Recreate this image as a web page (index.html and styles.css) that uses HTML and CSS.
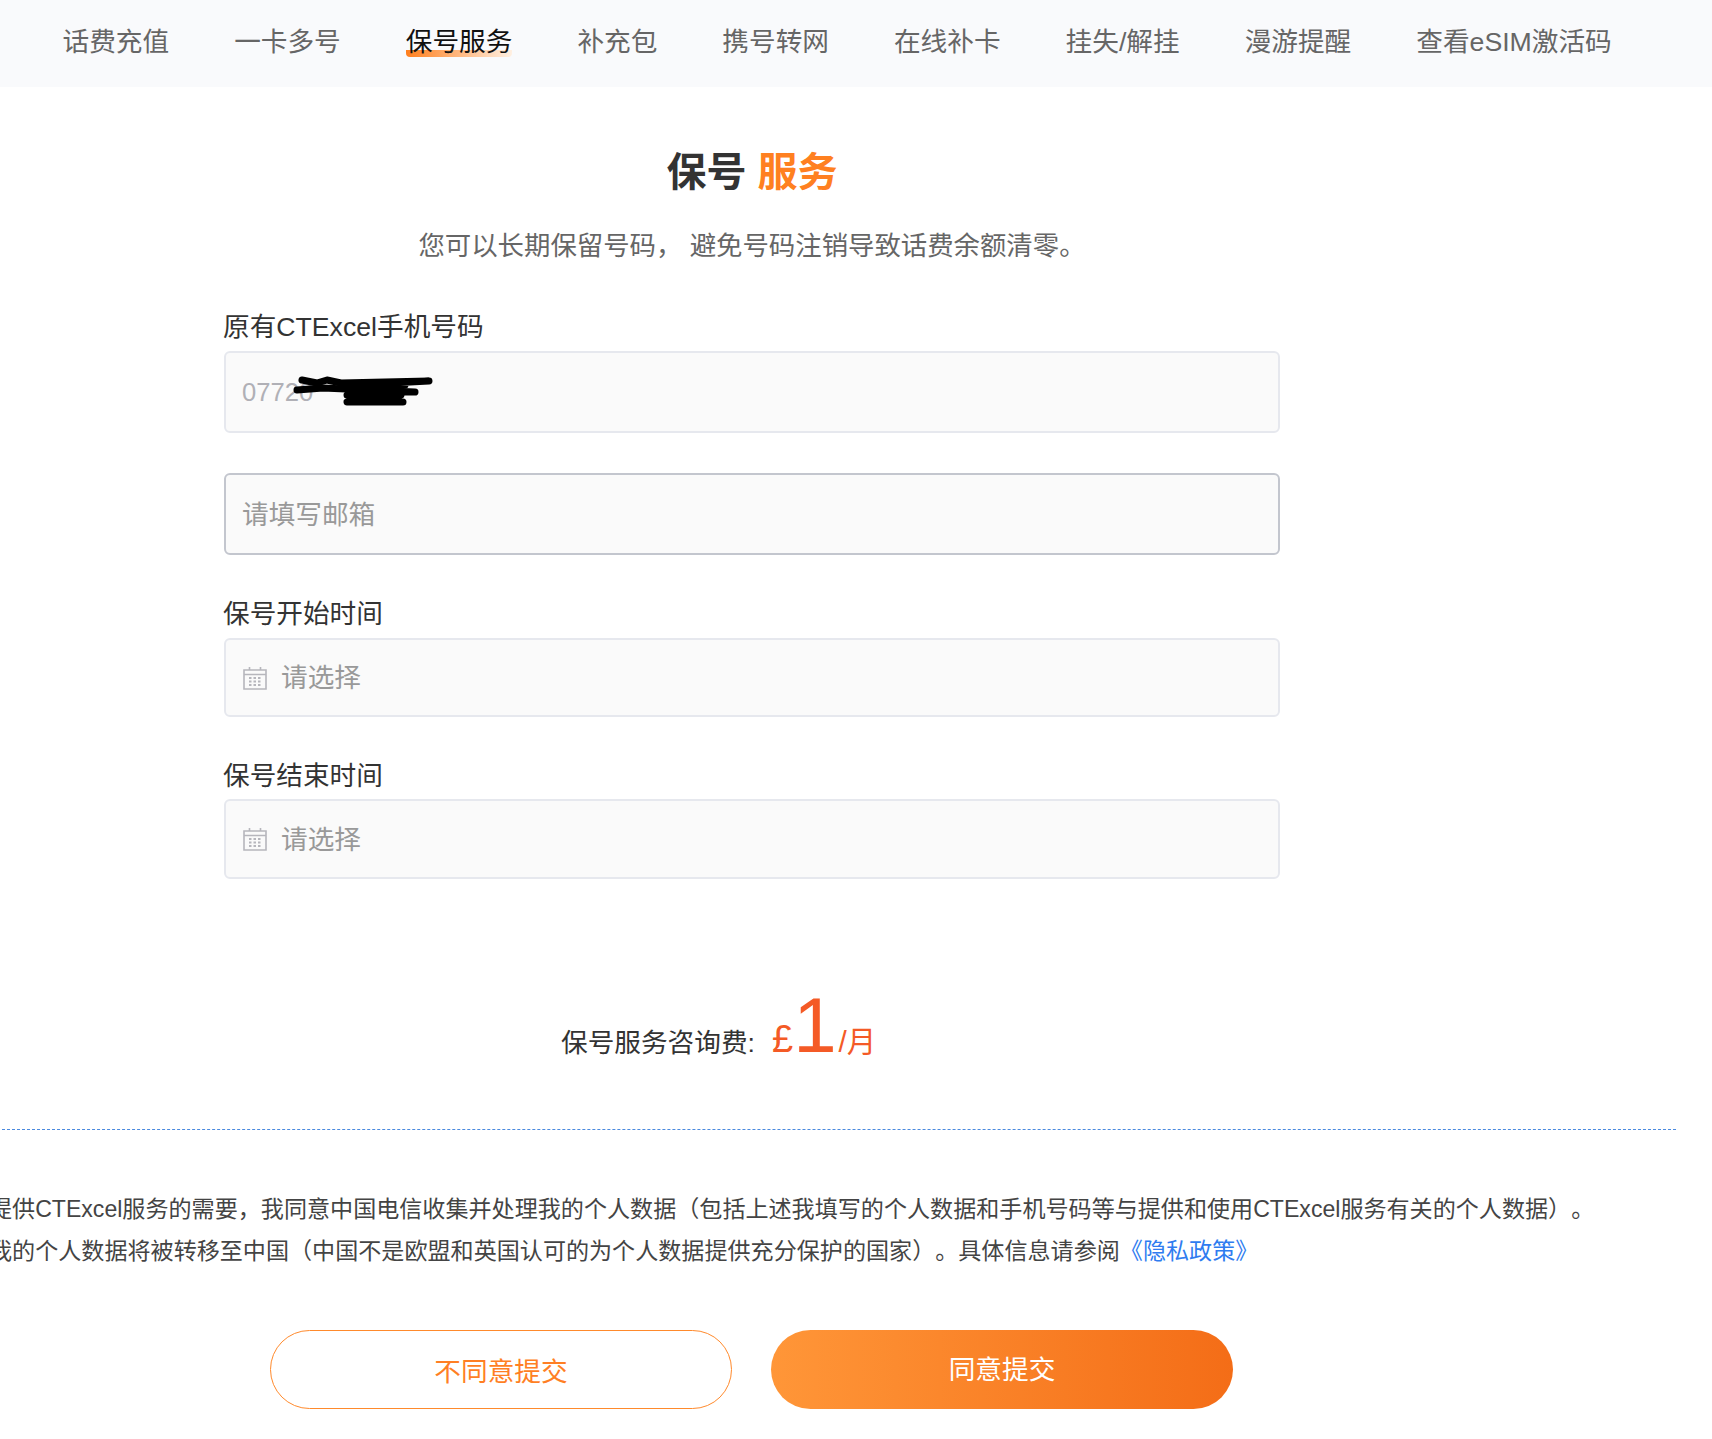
FILE: index.html
```html
<!DOCTYPE html>
<html lang="zh-CN">
<head>
<meta charset="utf-8">
<title>保号服务</title>
<link rel="stylesheet" href="styles.css">
</head>
<body>
<nav class="tabs">
  <a class="tab"><span class="tab-text">话费充值</span></a>
  <a class="tab"><span class="tab-text">一卡多号</span></a>
  <a class="tab tab-active"><span class="tab-text">保号服务</span></a>
  <a class="tab"><span class="tab-text">补充包</span></a>
  <a class="tab"><span class="tab-text">携号转网</span></a>
  <a class="tab"><span class="tab-text">在线补卡</span></a>
  <a class="tab"><span class="tab-text">挂失/解挂</span></a>
  <a class="tab"><span class="tab-text">漫游提醒</span></a>
  <a class="tab"><span class="tab-text">查看eSIM激活码</span></a>
</nav>
<main class="page">
  <h1 class="title">保号 <em class="title-accent">服务</em></h1>
  <p class="subtitle">您可以长期保留号码， 避免号码注销导致话费余额清零。</p>
  <form class="form">
    <label class="label label-first">原有CTExcel手机号码</label>
    <div class="field field-phone">
      <span class="value">07720</span>
      <svg class="scribble" viewBox="0 0 140 31" width="140" height="31" aria-hidden="true">
        <path class="scribble-line" d="M9 4 L24 7 L34 4 L48 7 L136 5 L60 9 L112 9"/>
        <path class="scribble-line" d="M4 14 L30 12 L122 16 L70 16"/>
        <path class="scribble-line" d="M54 19 L108 19 L54 26 L110 26"/>
      </svg>
    </div>
    <div class="field field-email"><span class="placeholder">请填写邮箱</span></div>
    <label class="label label-date">保号开始时间</label>
    <div class="field field-date">
      <svg class="cal" viewBox="0 0 24 24" width="24" height="24" aria-hidden="true">
        <path class="cal-line" d="M1 4 H23 V23 H1 Z M1 8.500 H23 M6.500 1 V4 M17.500 1 V4"/>
        <path class="cal-dots" d="M6 12 H19 M6 15.500 H19 M6 19 H19"/>
      </svg>
      <span class="placeholder">请选择</span>
    </div>
    <label class="label label-date label-end">保号结束时间</label>
    <div class="field field-date field-end">
      <svg class="cal" viewBox="0 0 24 24" width="24" height="24" aria-hidden="true">
        <path class="cal-line" d="M1 4 H23 V23 H1 Z M1 8.500 H23 M6.500 1 V4 M17.500 1 V4"/>
        <path class="cal-dots" d="M6 12 H19 M6 15.500 H19 M6 19 H19"/>
      </svg>
      <span class="placeholder">请选择</span>
    </div>
  </form>
  <div class="price">
    <span class="price-label">保号服务咨询费:</span>
    <span class="price-cur">£</span><span class="price-num">1</span><span class="price-unit">/月</span>
  </div>
  <hr class="rule">
  <div class="legal">
    <p class="legal-line">提供CTExcel服务的需要，我同意中国电信收集并处理我的个人数据（包括上述我填写的个人数据和手机号码等与提供和使用CTExcel服务有关的个人数据）。</p>
    <p class="legal-line">我的个人数据将被转移至中国（中国不是欧盟和英国认可的为个人数据提供充分保护的国家）。具体信息请参阅<a class="link">《隐私政策》</a></p>
  </div>
  <div class="actions">
    <button class="btn btn-ghost" type="button">不同意提交</button>
    <button class="btn btn-solid" type="button">同意提交</button>
  </div>
</main>
</body>
</html>
```
FILE: styles.css
```css
* { box-sizing: border-box; }
html, body { margin: 0; padding: 0; }
body {
  width: 1712px;
  height: 1439px;
  overflow: hidden;
  background: #fff;
  color: #333;
  font-family: "Liberation Sans", "Noto Sans CJK SC", sans-serif;
  font-size: 26.67px;
  text-spacing-trim: space-all;
}
.tabs {
  display: flex;
  align-items: flex-start;
  height: 87px;
  padding: 24px 0 0 30px;
  background: #f9fafc;
}
.tab { padding: 0 32.5px; color: #666; white-space: nowrap; }
.tab-text { display: block; height: 33px; line-height: 36px; }
.tab-active { color: #111; }
.tab-active .tab-text {
  background: linear-gradient(90deg, #ff7f1e, #fff0e2) left 26px / 100% 7px no-repeat;
  border-radius: 0 0 4px 4px;
}
.page { width: 1504px; }
.title {
  margin: 57px 0 0;
  font-size: 40px;
  line-height: 56px;
  font-weight: 700;
  text-align: center;
  color: #333;
}
.title-accent { font-style: normal; color: #ff8020; }
.subtitle {
  margin: 26px 0 0;
  font-size: 26.4px;
  line-height: 40px;
  text-align: center;
  color: #666;
}
.form { width: 1056px; margin: 43px auto 0; }
.label { display: block; height: 36px; line-height: 36px; margin: 0 0 6px -1px; color: #333; }
.label-date { margin-top: 41px; }
.label-end { margin-bottom: 5px; }
.field {
  position: relative;
  display: flex;
  align-items: center;
  height: 82px;
  padding-left: 16px;
  background: #fafafa;
  border: 2px solid #e6e8ee;
  border-radius: 6px;
}
.field-email { height: 82px; margin-top: 40px; border-color: #c3c6ce; }
.field-date { height: 79px; gap: 14px; }
.field-end { height: 80px; }
.value { color: #b0b0b6; font-size: 25.6px; }
.placeholder { color: #999; margin-bottom: 4px; }
.scribble { position: absolute; left: 67px; top: 23px; }
.scribble-line { fill: none; stroke: #000; stroke-width: 7; stroke-linecap: round; stroke-linejoin: round; }
.cal { margin-left: 1px; flex: none; }
.cal-line { fill: none; stroke: #b6b6bc; stroke-width: 1.6; }
.cal-dots { fill: none; stroke: #b6b6bc; stroke-width: 2; stroke-dasharray: 2.5 2; }
.price {
  display: flex;
  align-items: baseline;
  height: 77px;
  margin: 108px 0 0 561px;
  color: #f45a26;
  line-height: 76px;
}
.price-label { color: #333; width: 211px; }
.price-cur { font-size: 38px; }
.price-num { font-size: 78px; margin-right: 2px; }
.price-unit { font-size: 29.500px; }
.rule {
  width: 1674px;
  height: 0;
  margin: 65px 0 0 2px;
  border: 0;
  border-top: 1px dashed #4a8adf;
}
.legal { margin: 58px 0 0 -11px; width: 1710px; font-size: 23.08px; line-height: 42px; color: #444; white-space: nowrap; }
.legal-line { margin: 0; }
.link { color: #2f7cf0; }
.actions { display: flex; justify-content: center; gap: 39px; margin: 58px 0 0 -1px; }
.btn {
  width: 462px;
  height: 79px;
  border-radius: 40px;
  font: inherit;
  font-size: 26.67px;
  padding: 0;
}
.btn-ghost { background: #fff; border: 1px solid #ff8a2c; color: #ff7f24; padding-bottom: 1px; }
.btn-solid { background: linear-gradient(90deg, #ff9638, #f46d17); border: 0; color: #fff; padding-bottom: 4px; }
```
